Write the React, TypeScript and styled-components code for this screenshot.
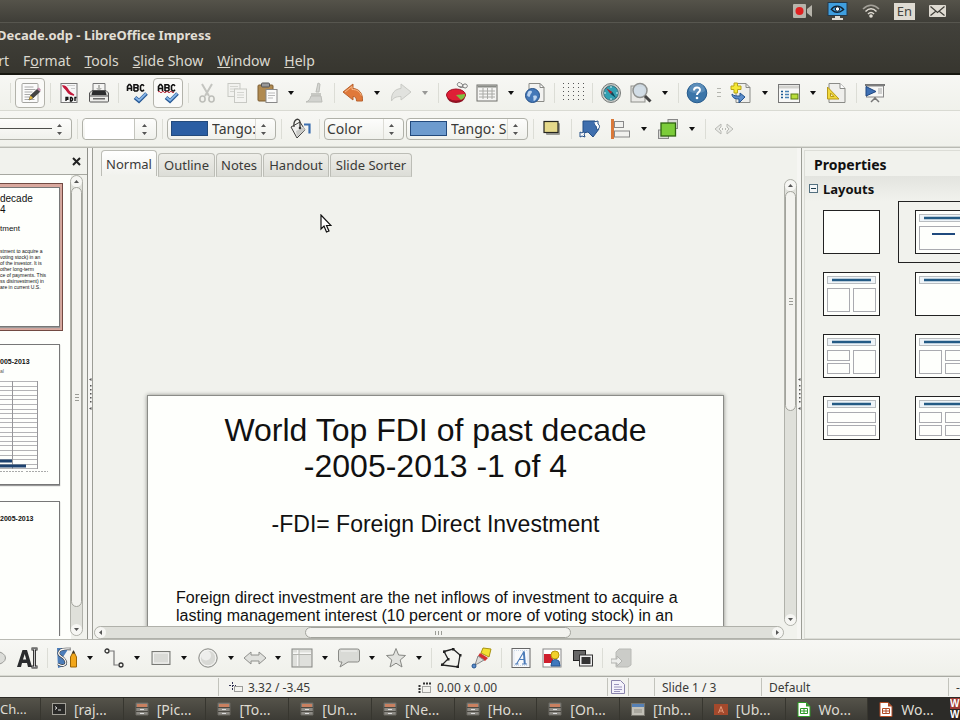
import React from "react";
import styled, { createGlobalStyle, css } from "styled-components";

const Global = createGlobalStyle`
  * { box-sizing: border-box; }
  html, body { margin: 0; padding: 0; overflow: hidden; }
  body { font-family: "Noto Sans", "Open Sans", sans-serif; font-size: 13px; color: #3a3a38; background: #f1f2ed; }
  button, select, input { font: inherit; color: inherit; margin: 0; padding: 0; border: 0; background: none; }
  svg { display: block; flex: none; }
  h1, h2, h3, p { margin: 0; font-weight: normal; }
`;

const Screen = styled.div`
  height: 100vh;
  display: flex;
  flex-direction: column;
  overflow: hidden;
`;

/* ---------- dark top ---------- */
const SystemPanel = styled.header`
  height: 23px;
  display: flex;
  align-items: center;
  justify-content: flex-end;
  gap: 14px;
  padding-right: 14px;
  background: linear-gradient(#55534a, #3f3e38);
  border-bottom: 1px solid #57564f;
  flex: none;
`;
const Indicator = styled.button`
  display: block;
`;
const Language = styled.button`
  width: 21px;
  height: 17px;
  background: #dfdbd2;
  color: #45443e;
  font-size: 13px;
  line-height: 17px;
`;
const TitleBar = styled.h1`
  height: 25px;
  flex: none;
  margin-left: -3px;
  font-size: 13px;
  font-weight: bold;
  line-height: 25px;
  color: #e2dfd6;
  white-space: nowrap;
`;
const TitleArea = styled.div`
  background: linear-gradient(#42413b, #37362f);
  border-bottom: 2px solid #16160f;
  flex: none;
  overflow: hidden;
`;
const MenuBar = styled.nav`
  height: 25px;
  display: flex;
  align-items: center;
  gap: 14px;
  color: #dbd8cf;
  font-size: 14px;
  line-height: 26px;
  white-space: nowrap;
`;
const Menu = styled.button`
  &:first-child { width: 9px; direction: rtl; }
`;

/* ---------- tool bars ---------- */
const Toolbar = styled.div<{ $h: number; $shift?: number }>`
  height: ${(p) => p.$h}px;
  flex: none;
  display: flex;
  align-items: center;
  overflow: hidden;
  background: linear-gradient(#f7f7f4, #f0f1eb);
  border-bottom: 1px solid #d9dad3;
  & > :first-child { margin-left: ${(p) => -(p.$shift ?? 0)}px; }
`;
const ToolButton = styled.button<{ $active?: boolean; $wide?: boolean }>`
  width: ${(p) => (p.$wide ? 31 : 30)}px;
  height: 30px;
  flex: none;
  display: flex;
  align-items: center;
  justify-content: center;
  ${(p) => p.$active && css`
    margin: 0 1px;
    border: 1px solid #b3b3ab;
    border-radius: 4px;
    background: #fafaf8;
  `}
`;
const Drop = styled.button<{ $narrow?: boolean; $dim?: boolean }>`
  width: ${(p) => (p.$narrow ? 16 : 18)}px;
  height: 30px;
  flex: none;
  display: flex;
  align-items: center;
  justify-content: center;
  opacity: ${(p) => (p.$dim ? 0.4 : 1)};
`;
const Separator = styled.span`
  width: 8px;
  height: 20px;
  flex: none;
  background: linear-gradient(#dcddd6, #dcddd6) center / 1px 100% no-repeat;
`;
const Combo = styled.label<{ $w: number; $open?: boolean }>`
  width: ${(p) => p.$w}px;
  height: 22px;
  flex: none;
  margin: 0 1px 0 ${(p) => (p.$open ? 0 : 1)}px;
  padding: 0 8px 0 ${(p) => (p.$open ? 0 : 2)}px;
  display: flex;
  align-items: center;
  gap: 4px;
  border: 1px solid #b0b1a9;
  border-left-width: ${(p) => (p.$open ? 0 : 1)}px;
  border-radius: ${(p) => (p.$open ? "0 4px 4px 0" : "4px")};
  background: linear-gradient(#fdfdfc, #f0f1ec);
  overflow: hidden;
`;
const Swatch = styled.span<{ $c: string }>`
  width: 37px;
  height: 15px;
  flex: none;
  margin-left: 1px;
  background: ${(p) => p.$c};
  border: 1px solid #234a7c;
`;
const Choice = styled.select`
  appearance: none;
  flex: 1;
  min-width: 0;
  height: 20px;
  font-size: 14px;
  line-height: 20px;
  border-right: 1px solid #dddcd6;
  overflow: hidden;
`;
const Amount = styled.input`
  flex: 1;
  min-width: 0;
  height: 20px;
  margin-right: 2px;
  border-right: 1px solid #c4c5be;
  background: #fff;
`;
const LineSample = styled.span`
  flex: 1;
  height: 1px;
  background: #4d4e4b;
`;

/* ---------- work area ---------- */
const Main = styled.main`
  flex: 1;
  min-height: 0;
  display: flex;
  border-top: 1px solid #b9bab3;
  border-bottom: 1px solid #b9bab3;
  background: #f1f2ed;
`;
const SlidePanel = styled.aside`
  width: 88px;
  flex: none;
  display: flex;
  flex-direction: column;
  border-right: 1px solid #8f908a;
`;
const PanelHead = styled.div`
  height: 27px;
  flex: none;
  display: flex;
  align-items: center;
  justify-content: flex-end;
  padding-right: 6px;
  border-bottom: 1px solid #a7a8a1;
`;
const PanelBody = styled.div`
  flex: 1;
  min-height: 0;
  display: flex;
  padding: 0 4px 3px 0;
  background: linear-gradient(90deg, #fefffc 71px, #f1f2ed 71px);
`;
const Thumbs = styled.div`
  flex: 1;
  display: flex;
  flex-direction: column;
  align-items: flex-start;
  overflow: hidden;
  padding-top: 8px;
  color: #111;
  font-family: "Liberation Sans", sans-serif;
  white-space: nowrap;
`;
const SelectedFrame = styled.div`
  width: 63px;
  height: 148px;
  flex: none;
  padding: 3px 3px 3px 0;
  background: #d9a89e;
  border: 1px solid #724a43;
  border-left: 0;
`;
const Thumb = styled.section<{ $h: number; $gap?: number }>`
  width: 60px;
  height: ${(p) => p.$h}px;
  flex: none;
  margin-top: ${(p) => p.$gap ?? 0}px;
  background: #fefffc;
  border: 1px solid #777;
  border-left: 0;
  box-shadow: 0 1px 1px #999;
  overflow: hidden;
`;
const ThumbTitle = styled.h3`
  font-size: 10px;
  line-height: 11px;
  padding-top: 5px;
`;
const ThumbSub = styled.p`
  font-size: 8px;
  line-height: 10px;
  padding: 9px 0 14px;
`;
const ThumbBody = styled.p`
  font-size: 5px;
  line-height: 6px;
`;
const ThumbHeading = styled.h3`
  font-size: 7px;
  font-weight: bold;
  line-height: 10px;
  padding-top: 12px;
`;
const ThumbNote = styled.p`
  font-size: 5px;
  line-height: 8px;
  color: #555;
`;

const Bar = styled.div<{ $row?: boolean }>`
  display: flex;
  flex: none;
  flex-direction: ${(p) => (p.$row ? "row" : "column")};
  ${(p) => (p.$row ? "height: 13px;" : "width: 13px;")}
  border: 1px solid #b0b1aa;
  border-radius: 7px;
  background: #dfe0da;
  overflow: hidden;
`;
const BarEnd = styled.button`
  flex: none;
  width: 11px;
  height: 11px;
  display: flex;
  align-items: center;
  justify-content: center;
  background: #f6f6f3;
  border-radius: 6px;
`;
const BarThumb = styled.div<{ $grow: number }>`
  flex: ${(p) => p.$grow} 1 0;
  display: flex;
  align-items: center;
  justify-content: center;
  background: #f3f3ef;
  border: 1px solid #a2a39c;
  border-radius: 7px;
`;
const BarSpace = styled.div<{ $grow: number }>`
  flex: ${(p) => p.$grow} 1 0;
`;

const Splitter = styled.div`
  width: 5px;
  flex: none;
  display: flex;
  align-items: center;
  justify-content: center;
  background: #f6f6f3;
  border-right: 1px solid #9c9d96;
`;

const Center = styled.div`
  flex: 1;
  min-width: 0;
  display: flex;
  flex-direction: column;
`;
const Tabs = styled.div`
  height: 29px;
  flex: none;
  display: flex;
  align-items: flex-end;
  gap: 1px;
  padding: 0 0 0 8px;
`;
const Tab = styled.button<{ $w: number; $active?: boolean }>`
  width: ${(p) => p.$w}px;
  height: ${(p) => (p.$active ? 26 : 24)}px;
  border: 1px solid #bcbdb6;
  border-bottom: 0;
  border-radius: 4px 4px 0 0;
  white-space: nowrap;
  line-height: 22px;
  ${(p) => p.$active
    ? css`background: linear-gradient(#fff, #f1f2ed); align-self: flex-start; margin-top: 2px;`
    : css`background: linear-gradient(#eeeee9, #dcddd7); border-bottom: 1px solid #d0d1ca;`}
`;
const WorkRow = styled.div`
  flex: 1;
  min-height: 0;
  display: flex;
  padding-top: 2px;
`;
const Canvas = styled.div`
  flex: 1;
  min-width: 0;
  position: relative;
  overflow: hidden;
  padding: 216px 60px 0 54px;
`;
const Pointer = styled.svg`
  position: absolute;
  left: 227px;
  top: 35px;
`;
const Slide = styled.article`
  height: 433px;
  background: #fefffc;
  border: 1px solid #8b8c88;
  box-shadow: 0 0 4px #8a8b86;
  font-family: "Liberation Sans", sans-serif;
  color: #111;
  padding: 16px 28px;
`;
const SlideTitle = styled.h2`
  font-size: 32px;
  line-height: 36px;
  text-align: center;
`;
const SlideSub = styled.p`
  font-size: 23px;
  line-height: 28px;
  text-align: center;
  padding: 26px 0 51px;
`;
const SlideText = styled.p`
  font-size: 16px;
  line-height: 18px;
  white-space: nowrap;
`;
const BottomRow = styled.div`
  display: flex;
  flex: none;
  padding: 0 13px 0 1px;
  & > * { flex: 1; }
`;

const Sidebar = styled.aside`
  width: 158px;
  flex: none;
  overflow: hidden;
  padding: 2px 0 0 2px;
  color: #111;
  background: #f1f2ed;
`;
const SideInner = styled.div`
  height: 100%;
  border: 1px solid #dcddd7;
  border-right: 0;
`;
const SideTitle = styled.h2`
  height: 25px;
  font-size: 14px;
  line-height: 28px;
  padding-left: 9px;
  font-weight: bold;
`;
const SideSection = styled.h3`
  height: 25px;
  display: flex;
  align-items: center;
  gap: 5px;
  padding-left: 4px;
  font-size: 13px;
  font-weight: bold;
  background: linear-gradient(#e3e4df, #f1f2ed);
`;
const Layouts = styled.div`
  display: grid;
  grid-template-columns: 92px 92px;
  grid-auto-rows: 62px;
  padding-left: 1px;
`;
const LayoutCell = styled.button<{ $on?: boolean }>`
  display: flex;
  align-items: center;
  padding-left: ${(p) => (p.$on ? 16 : 17)}px;
  border: ${(p) => (p.$on ? "1px solid #222" : "0")};
`;

/* ---------- bottom ---------- */
const StatusBar = styled.footer`
  height: 21px;
  flex: none;
  display: flex;
  align-items: center;
  border-top: 1px solid #a9aaa3;
  background: #f3f3ef;
  font-size: 12px;
  white-space: nowrap;
  overflow: hidden;
`;
const Field = styled.div<{ $w: number; $line?: boolean; $pad?: number; $grow?: boolean }>`
  ${(p) => (p.$grow ? "flex: 1;" : `flex: none; width: ${p.$w}px;`)}
  height: 18px;
  display: flex;
  align-items: center;
  gap: 5px;
  padding-left: ${(p) => p.$pad ?? 7}px;
  border-left: ${(p) => (p.$line ? "1px solid #c2c3bc" : "0")};
`;
const TaskBar = styled.footer`
  height: 23px;
  flex: none;
  display: grid;
  grid-template-columns: 40px repeat(11, 1fr) 10px;
  background: #4a4841;
  border-top: 1px solid #2b2a26;
  overflow: hidden;
`;
const Task = styled.button<{ $on?: boolean; $bare?: boolean }>`
  min-width: 0;
  height: 22px;
  display: flex;
  align-items: center;
  gap: 8px;
  padding-left: ${(p) => (p.$bare ? 0 : 11)}px;
  border-left: ${(p) => (p.$bare ? 0 : 1)}px solid #37362f;
  color: #dedbd2;
  font-size: ${(p) => (p.$bare ? 13 : 14)}px;
  white-space: nowrap;
  overflow: hidden;
  background: ${(p) => (p.$on ? "#2c2b28" : "linear-gradient(#55534a, #3c3b35)")};
`;
const Workspaces = styled.div`
  background: #2b2220;
  color: #fff;
  font-family: "Liberation Sans", sans-serif;
  font-size: 10px;
  line-height: 11px;
  font-weight: bold;
  overflow: hidden;
`;
const WorkspaceTop = styled.div`
  background: #9b3a35;
`;

/* ---------- icons ---------- */
const I = ({ children, s = 22 }: { children: React.ReactNode; s?: number }) => (
  <svg width={s} height={s} viewBox="0 0 22 22" fill="none" aria-hidden="true">{children}</svg>
);
const Caret = () => <svg width="6" height="4" viewBox="0 0 6 4"><path d="M0 0h6L3 4z" fill="#111" /></svg>;
const Steps = () => (
  <svg width="7" height="14" viewBox="0 0 7 14"><path d="M1 5l2.500-3L6 5zM1 10h5L3.500 13z" fill="#555" /></svg>
);

const icons: Record<string, React.ReactNode> = {
  red: <I><rect x="4" y="5" width="15" height="14" fill="#eee" stroke="#888" /><path d="M10 2l9 6" stroke="#c0392b" strokeWidth="2.500" /></I>,
  edit: <I><rect x="3" y="1.500" width="16" height="19" rx="1" fill="#fbfbfb" stroke="#a4a4a0" /><path d="M5.500 5h9M5.500 7.500h11M5.500 10h8M5.500 12.500h6M5.500 15h5M5.500 17.500h10" stroke="#aaa" /><path d="M10 18l1.500-4.500 7-6.500 2.500 2.500-7 6.500z" fill="#444" stroke="#222" strokeWidth=".6" /><path d="M18 7l2-1.500 2 2.500-1.500 1.500z" fill="#c58cab" /><path d="M11.500 13.500l2.500 2.500-4 2z" fill="#e5b93d" /></I>,
  pdf: <I><rect x="3" y="1.500" width="16" height="19" fill="#f6f6f6" stroke="#777" /><path d="M5 4c3 0 4 2 5.500 4.500S14 12 16 13c-3 0-5-1-7-4S6 6 5 4z" fill="#c2183a" stroke="#c2183a" strokeWidth="1.300" /><path d="M9 3.500h8M13 6.500h4" stroke="#ccc" /><path d="M8 19v-3.500h1.800v1.800H8M12.500 19v-3.500h1l1 1v1.500l-1 1zM17 19v-3.500h1.500" stroke="#111" strokeWidth="1.400" /></I>,
  print: <I><path d="M5 9V1.500h12V9" fill="#f4f4f2" stroke="#777" /><path d="M10 3h2v3h2l-3 3-3-3h2z" fill="#b5b6b2" /><path d="M1.500 11L4 8.500h14l2.500 2.500v5h-19z" fill="#d8d8d5" stroke="#555" /><path d="M4.500 9h13l1 4h-15z" fill="#2c2d2e" /><path d="M1.500 14h19v5a1 1 0 0 1-1 1h-17a1 1 0 0 1-1-1z" fill="#ededea" stroke="#555" /><path d="M5 16h12v1.500H5z" fill="#666" /></I>,
  spell: <I><Abc /><Check /></I>,
  autospell: <I><Abc /><path d="M1 10q1-1.500 2 0t2 0 2 0 2 0 2 0 2 0 2 0 2 0" stroke="#b8283a" /><Check /></I>,
  cut: <I><path d="M6 2l7 12M16 2L9 14" stroke="#c4c5c0" strokeWidth="2" /><ellipse cx="6.500" cy="17" rx="2.600" ry="3" stroke="#bdbeb9" strokeWidth="1.600" /><ellipse cx="15.500" cy="17" rx="2.600" ry="3" stroke="#bdbeb9" strokeWidth="1.600" /></I>,
  copy: <I><rect x="2" y="1.500" width="12" height="13" fill="#f2f2ef" stroke="#c8c9c4" /><path d="M4 4.500h8M4 7h8M4 9.500h4" stroke="#d4d5d0" /><rect x="8.500" y="7" width="12" height="13.500" fill="#f4f4f1" stroke="#c8c9c4" /><path d="M11 10.500h7M11 13h7M11 15.500h7" stroke="#d4d5d0" /></I>,
  paste: <I><rect x="2" y="3" width="15" height="16" rx="1" fill="#b08a50" stroke="#7d5e33" /><rect x="5.500" y="1" width="8" height="4" rx="1" fill="#999" stroke="#555" /><rect x="10" y="7.500" width="11" height="13" fill="#fbfbfa" stroke="#888" /><path d="M12 11h7M12 13.500h7M12 16h5" stroke="#bbb" /></I>,
  brush: <I><path d="M14 1l2 1-1 8h-3z" fill="#d5d6d2" stroke="#bbbcb7" /><path d="M7 11h10v3H7z" fill="#c7c8c3" /><path d="M7 14h10l1 6H2c3-1 4-3 5-6z" fill="#d2d3cf" stroke="#bbbcb7" /></I>,
  undo: <I><path d="M1 10L11 2v4.500c6 .5 10 4.500 9.500 12.500h-6c0-3-1-4.500-3.500-4.500V18z" fill="#e0793a" stroke="#b8622e" /><path d="M3 10l7-5.500v3c5 0 8 2 9.300 6" stroke="#f5b98a" /></I>,
  redo: <I><path d="M21 10L11 2v4.500c-6 .5-10 4.500-9.500 12.500 2-3 4-4.500 9.500-4.500V18z" fill="#e1e2de" stroke="#c9cac5" /></I>,
  chart: <I><ellipse cx="10" cy="15" rx="9" ry="6" fill="#8c1020" /><ellipse cx="10" cy="13" rx="9.500" ry="6" fill="#df1f36" stroke="#a01024" /><path d="M10 13l9-1c.5 3-2 5-4 6z" fill="#7fc241" /><path d="M13 4.500a2 2 0 1 0 2-3 2 2 0 1 0-2 3l5 1a2 2 0 1 0 1-3.500 2 2 0 0 0-2 3" stroke="#777" /></I>,
  table: <I><rect x="1" y="3" width="20" height="16" fill="#f5f5f3" stroke="#6e6f6b" /><path d="M1.500 4.500h19" stroke="#888a85" strokeWidth="2" /><path d="M3 9h16M3 12h16M3 15h16M7 6v11M11.500 6v11M16 6v11" stroke="#a9aaa6" /></I>,
  web: <I><path d="M5 1.500h11l4 4v14H5z" fill="#f3f3f1" stroke="#8a8b87" /><path d="M16 1.500v4h4z" fill="#fff" stroke="#8a8b87" /><circle cx="8.500" cy="13.500" r="7" fill="#4478b8" stroke="#234e86" /><path d="M4 10c2-2 4-1 4 0s-2 2-2 4-3 0-3-1M9 14c3-1 4 0 4 1s-2 4-3 4 0-3-1-5M9 9l3 2" fill="#bcd3ee" /></I>,
  grid: <I><path d="M1.500 1v20M6.500 1v20M11.500 1v20M16.500 1v20M21.500 1v20" stroke="#555" strokeDasharray="1 3" /></I>,
  compass: <I><circle cx="11" cy="11" r="9.500" fill="#c9cbc8" stroke="#777b79" /><circle cx="11" cy="11" r="7.200" fill="#32a0b2" stroke="#3b6f7a" /><path d="M6 6l6.500 4-2 2z" fill="#a52730" /><path d="M16 16l-5.500-4 2-2z" fill="#145" /><path d="M11 4v2M11 16v2M4 11h2M16 11h2" stroke="#d7f2f5" /></I>,
  zoom: <I><rect x="1" y="4" width="14" height="16" fill="#e9e9e6" stroke="#8e8f8b" /><circle cx="10" cy="8.500" r="7" fill="#cfdbe6" fillOpacity=".9" stroke="#909290" strokeWidth="1.500" /><path d="M15 14l5.500 5.500" stroke="#444" strokeWidth="3" /></I>,
  help: <I><circle cx="11" cy="11" r="9.800" fill="#3c76a9" stroke="#255a8c" /><path d="M3 9a8 8 0 0 1 16 0c-5 3-11 3-16 0z" fill="#5b8db9" /><path d="M8 8.500c0-4 6-4 6-.5 0 2.200-3 2.500-3 5" stroke="#fff" strokeWidth="2" /><circle cx="11" cy="16" r="1.300" fill="#fff" /></I>,
  newslide: <I><path d="M6 1.500h10l4 4v15H6z" fill="#efefec" stroke="#8a8b87" /><path d="M16 1.500v4h4" stroke="#8a8b87" /><path d="M4 1h3.500v3H11v3.500H7.500V11H4V7.500H1V4h3z" fill="#f5e835" stroke="#b8a416" /><path d="M2 12c0 4 3 5 7 5v4l6-6-5-4v3c-4 0-6 0-8-2z" fill="#5b8cca" stroke="#25548e" /></I>,
  slayout: <I><rect x=".5" y="2.500" width="21" height="18" fill="#f8f8f7" stroke="#777" /><path d="M1 5h20" stroke="#d2d2ce" strokeWidth="3" /><path d="M3 9.500h2M3 12.500h2M3 15.500h2" stroke="#1d5a94" strokeWidth="1.500" /><path d="M7 9.500h4M7 12.500h4M7 15.500h4" stroke="#4a82b5" strokeWidth="1.300" /><rect x="13" y="12" width="7" height="5" fill="#b8dc3a" stroke="#5a7c14" /></I>,
  ruler: <I><path d="M3 1.500h11l5 5v14H3z" fill="#efefec" stroke="#8a8b87" /><path d="M14 1.500v5h5" fill="#fff" stroke="#8a8b87" /><path d="M1.500 5v12H13z" fill="#f0d83c" stroke="#b89a18" /><path d="M4.500 11v3.500H8z" fill="#f8f3cf" stroke="#b89a18" /></I>,
  present: <I><path d="M1 3h20" stroke="#777" strokeWidth="2" /><rect x="2.500" y="4" width="17" height="11" fill="#f7f7f5" stroke="#888" /><path d="M14 7h4M14 9h4M14 11h4" stroke="#aaa" /><path d="M11 15v3M11 16l-4 4M11 16l4 4" stroke="#777" strokeWidth="1.500" /><path d="M2 4.500l10 5-10 4.500z" fill="#3e70b4" stroke="#1f4680" /></I>,
  bucket: <I><path d="M2 9l9-5 5 8-8 8z" fill="#f0f0ee" stroke="#3d3d3b" /><path d="M5 9c-1-8 5-10 6-5v6" stroke="#3d3d3b" strokeWidth="1.300" /><path d="M7 13l8-4 1 3-8 7z" fill="#c9cac7" /><circle cx="11" cy="10" r="1.300" fill="#333" /><path d="M15 6.500h5.500v9" stroke="#3c6fb0" strokeWidth="2.200" /></I>,
  shadow: <I><rect x="5" y="5" width="14" height="12" rx="1" fill="#9b9c96" /><rect x="3" y="3.500" width="14" height="11" fill="#e5d98a" stroke="#25251f" strokeWidth="1.200" /></I>,
  rotate: <I><path d="M4 3h12v4l4 4-6 8-5-5-5 1z" fill="#3f6fae" stroke="#234e86" /><path d="M1 19v-5l2 1c2-2 4 0 2 1l1 3-3-1zM15 4l4-1v3c3 2 1 5-1 6l-1-4" fill="#fff" stroke="#234e86" /></I>,
  align: <I><path d="M3.500 1v20" stroke="#d9793a" strokeWidth="3" /><rect x="5.500" y="3.500" width="9" height="6" fill="#f1f1ee" stroke="#888" /><rect x="5.500" y="13" width="15" height="6" fill="#f1f1ee" stroke="#888" /></I>,
  arrange: <I><rect x="11" y="1.500" width="9.500" height="9" fill="#d9dad6" stroke="#888" /><rect x="1.500" y="12" width="10" height="8.500" fill="#d9dad6" stroke="#888" /><rect x="4" y="5" width="14.500" height="13" fill="#7ccc3a" stroke="#2e6310" strokeWidth="1.300" /></I>,
  arrows: <I><path d="M8 6l-6 5 6 5v-3l-2-2 2-2zM14 6l6 5-6 5v-3l2-2-2-2z" fill="#e9eae6" stroke="#b9bab5" /><path d="M9 10h1v2H9zM12 10h1v2h-1z" fill="#b9bab5" /></I>,
  ellipse: <I><ellipse cx="10" cy="11" rx="9.500" ry="6.500" fill="#dcddd9" stroke="#9a9b97" /></I>,
  textA: <I><path d="M0 20L5.500 3h4.500l5 17h-4l-1-4H5l-1 4zM6 12.500h3.200L7.700 7z" fill="#2a2c2e" /><path d="M14.500 2h6M14.500 20h6M17.500 2v18" stroke="#222" strokeWidth="2.800" /><path d="M15 2h5M15 20h5M17.500 2v18" stroke="#eee" strokeWidth=".8" /></I>,
  curve: <I><path d="M1 1h12L7 10l4 8-9 3z" fill="#4c7db9" /><path d="M2 17c5 3 10 1 7-4s-8-4-6-8 7-3 12-3" stroke="#333" strokeWidth="2.400" /><path d="M2 17c5 3 10 1 7-4s-8-4-6-8 7-3 12-3" stroke="#fff" strokeWidth="1.200" /><path d="M14.500 10l3-6 3 6v10h-6z" fill="#f2a71b" stroke="#9a6508" /><path d="M16 6.500l1.500-3.500L19 6.500z" fill="#333" /></I>,
  connector: <I><circle cx="4" cy="4" r="2" stroke="#333" strokeWidth="1.300" /><circle cx="18" cy="18" r="2" stroke="#333" strokeWidth="1.300" /><path d="M6 4h5v14h5" stroke="#777" strokeWidth="1.200" /></I>,
  rect: <I><rect x="2" y="4.500" width="18" height="13" fill="#d9dad6" stroke="#777874" /><path d="M3.500 6h15v10h-15z" stroke="#f3f3f1" /></I>,
  ball: <I><circle cx="11" cy="11" r="9.200" fill="#d8d9d5" stroke="#8b8c88" /><circle cx="9" cy="8.500" r="5" fill="#eeeeec" /><circle cx="11" cy="11" r="7.800" stroke="#f6f6f4" /></I>,
  darrow: <I><path d="M0 11l7-6v3h8V5l7 6-7 6v-3H7v3z" fill="#e0e1dd" stroke="#8f908c" /></I>,
  flow: <I><rect x="1" y="2" width="20" height="18" fill="#dfe0dc" stroke="#848581" /><path d="M2 6.500h18M7 3v16" stroke="#f8f8f6" strokeWidth="2" /><path d="M2 7.500h18M8 3v16" stroke="#b4b5b0" /></I>,
  callout: <I><path d="M2.500 2h17a2 2 0 0 1 2 2v9a2 2 0 0 1-2 2H10l-8 5 2-5H2.500a2 2 0 0 1-2-2V4a2 2 0 0 1 2-2z" fill="#d9dad6" stroke="#898a86" /><path d="M3 4h16" stroke="#f4f4f2" /></I>,
  star: <I><path d="M11 1.500l2.600 6.500 6.900.5-5.300 4.500 1.800 7-6-3.800L5 20l1.800-7L1.500 8.500l6.900-.5z" fill="#e2e3df" stroke="#868783" /></I>,
  points: <I><path d="M4 4.500L13 2l7 6-2 12L2 18l6-6z" stroke="#222" strokeWidth="1.300" /><path d="M3 3.500h2.500V6H3zM12 1h2.500v2.500H12zM19 7h2.500v2.500H19zM16.500 18.500H19V21h-2.500zM1 16.500h2.500V19H1zM7 11h2.500v2.500H7z" fill="#222" /></I>,
  glue: <I><path d="M12 1l8 1-2 8-8-4z" fill="#f4e132" stroke="#a89312" /><path d="M9 6l8 5-3 3-7-5z" fill="#d32f2f" /><path d="M7 9l6 4-5 3-4 2z" fill="#dcdcd9" stroke="#888" /><circle cx="3" cy="19" r="2" fill="#5b8cca" stroke="#25548e" /></I>,
  fontwork: <I><rect x="2" y="1.500" width="18" height="19" fill="#f8f9fb" stroke="#666" /><rect x="4" y="3.500" width="14" height="15" stroke="#c8d7e8" strokeDasharray="1 1" /><path d="M6.500 17L14 4.500M9 12.500h5M5 17h3.500M12 17h5" stroke="#4a7ab8" strokeWidth="1.100" /><path d="M13.800 4.500L14.800 17" stroke="#4a7ab8" strokeWidth="2" /></I>,
  gallery: <I><rect x="2" y="2" width="18" height="18" fill="#fff" stroke="#888" /><rect x="3" y="7" width="9" height="9" fill="#cf1f2e" /><path d="M10 19l1-5 3-2 4 2 1 5z" fill="#3f78bd" stroke="#25548e" /><circle cx="14" cy="8" r="4" fill="#f2d02c" stroke="#b8960e" /></I>,
  stack: <I><rect x="1.500" y="3.500" width="12" height="10" fill="#666" stroke="#222" /><rect x="7.500" y="8" width="13" height="11" fill="#eee" stroke="#333" /><rect x="9.500" y="10" width="9" height="7" fill="#333" /></I>,
  extrude: <I><path d="M5 5l3-3h12v16l-3 2H5z" fill="#cbccc8" stroke="#b9bab6" /><path d="M0 12h6V9l5 5-5 5v-3H0z" fill="#ecedea" stroke="#b2b3af" /></I>,
};
function Abc() {
  return <path d="M1.500 9V4.500L3 2.500h1L5.500 4.500V9M1.500 6.500h4M8 9V2.700h3l1 1V5l-1 .8H8M11 5.800l1 1v1.200l-1 1H8M18 4l-1.200-1.300h-1L14.500 4v3.700L15.800 9h1L18 7.700" stroke="#111" strokeWidth="1.600" />;
}
function Check() {
  return <><path d="M9 15.500l4 3.500 7.500-7.500" stroke="#235694" strokeWidth="3.800" /><path d="M9.500 15.500l3.500 3 7-7" stroke="#85b4e6" strokeWidth="2" /></>;
}
const taskIcon: Record<string, React.ReactNode> = {
  file: <svg width="14" height="14" viewBox="0 0 14 14"><path d="M1 1h12v12H1z" fill="#8d8b85" stroke="#6b6963" /><path d="M2 2h10v3H2z" fill="#c98060" /><path d="M1 5.500h12M1 9.500h12" stroke="#4a4842" /><path d="M5 7.500h4M5 11.500h4" stroke="#ddd" /></svg>,
  term: <svg width="14" height="12" viewBox="0 0 14 12"><rect x=".5" y=".5" width="13" height="11" fill="#2a2a28" stroke="#a19f97" /><path d="M3 3.500l2 1.500-2 1.500M6 7h3" stroke="#ddd" fill="none" /></svg>,
  win: <svg width="14" height="13" viewBox="0 0 14 13"><rect x=".5" y=".5" width="13" height="12" fill="#c2c0b7" stroke="#77756d" /><path d="M1 1h12v3H1z" fill="#5580b5" /><path d="M3 6h8v4H3z" fill="#a9a79e" /></svg>,
  ub: <svg width="14" height="13" viewBox="0 0 14 13"><path d="M0 1h14v11H0z" fill="#a4492c" /><path d="M4.500 10L7 3.500 9.500 10M5.500 8h3" stroke="#e59b7b" fill="none" /></svg>,
  calc: <svg width="14" height="15" viewBox="0 0 14 15"><path d="M1 .5h8l4 4v10H1z" fill="#fff" stroke="#2d9a24" /><path d="M9 .5v4h4z" fill="#2d9a24" /><path d="M3.500 6.500h7v5h-7zM3.500 9h7M7 6.500v5" stroke="#2d9a24" fill="none" /></svg>,
  impress: <svg width="14" height="15" viewBox="0 0 14 15"><path d="M1 .5h8l4 4v10H1z" fill="#fff" stroke="#b24b24" /><path d="M9 .5v4h4z" fill="#b24b24" /><path d="M3.500 6.500h7v5h-7zM3.500 9h7M7 6.500v5" stroke="#b24b24" fill="none" /></svg>,
};

const row1 = ["red", "|", "*edit", "|", "pdf", "print", "|", "spell", "*autospell", "|", "cut", "copy", "paste", "v", "brush", "|", "undo", "v", "redo", "d", "|", "chart", "table", "v", "web", "|", "grid", "|", "compass", "zoom", "v", "|", "help", ":", "newslide", "v", "slayout", "v", "ruler", "|", "present"];
const row3 = ["ellipse", "textA", "|", "curve", "v", "connector", "v", "rect", "v", "ball", "v", "darrow", "v", "flow", "v", "callout", "v", "star", "v", "|", "points", "glue", "|", "fontwork", "gallery", "stack", "|", "extrude"];
const Grip = styled.span`
  width: 14px;
  height: 9px;
  flex: none;
  background: repeating-linear-gradient(#b5b6b0 0 1px, transparent 1px 4px) center / 4px 100% no-repeat;
`;
const Tools = ({ items, wide }: { items: string[]; wide?: boolean }) => (
  <>
    {items.map((it, i) => {
      if (it === "|") return <Separator key={i} />;
      if (it === ":") return <Grip key={i} />;
      if (it === "v" || it === "d") return <Drop key={i} $narrow={wide} $dim={it === "d"} aria-label="More options"><Caret /></Drop>;
      const on = it[0] === "*";
      const name = on ? it.slice(1) : it;
      return <ToolButton key={i} $active={on} $wide={wide} aria-label={name}>{icons[name]}</ToolButton>;
    })}
  </>
);

const Arrow = ({ d }: { d: string }) => <svg width="7" height="7" viewBox="0 0 7 7"><path d={d} fill="#555" /></svg>;
const up = "M1 5l2.500-3L6 5z", down = "M1 2h5L3.500 5z", left = "M5 1v5L2 3.500z", right = "M2 1v5l3-2.500z";
const Ridges = ({ row }: { row?: boolean }) => (
  <svg width="7" height="7" viewBox="0 0 7 7"><path d={row ? "M.5 2v4M3.500 2v4M6.500 2v4" : "M2 .5h4M2 3.500h4M2 6.500h4"} stroke="#9b9c96" /></svg>
);
const Dots = () => <svg width="3" height="32" viewBox="0 0 3 32"><path d="M2.500 0v3L0 1.500zM2.500 29v3L0 30.500zM1 7h1.500v1.500H1zM1 11h1.500v1.500H1zM1 15h1.500v1.500H1zM1 19h1.500v1.500H1zM1 23h1.500v1.500H1z" fill="#555" /></svg>;

const VBar = ({ parts }: { parts: [number, number] }) => (
  <Bar>
    <BarEnd aria-label="Scroll up"><Arrow d={up} /></BarEnd>
    <BarThumb $grow={parts[0]}><Ridges /></BarThumb>
    <BarSpace $grow={parts[1]} />
    <BarEnd aria-label="Scroll down"><Arrow d={down} /></BarEnd>
  </Bar>
);

const boxes: number[][][] = [
  [],
  [[5, 16, 48, 24]],
  [[5, 16, 22, 24], [31, 16, 22, 24]],
  [],
  [[5, 16, 22, 11], [5, 29, 22, 11], [31, 16, 22, 24]],
  [[5, 16, 22, 24], [31, 16, 22, 11], [31, 29, 22, 11]],
  [[5, 16, 48, 11], [5, 29, 48, 11]],
  [[5, 16, 22, 11], [31, 16, 22, 11], [5, 29, 22, 11], [31, 29, 22, 11]],
];
const LayoutPicture = ({ n }: { n: number }) => (
  <svg width="57" height="44" viewBox="0 0 57 44">
    <rect x=".5" y=".5" width="56" height="43" fill="#fefffc" stroke="#222" />
    {n > 0 && <><rect x="4.500" y="4.500" width="48" height="7" fill="#eef4f8" stroke="#b9bdc0" /><path d="M9 8h39" stroke="#245b85" strokeWidth="2.500" /></>}
    {n === 1 && <path d="M17 24h23" stroke="#1f4a7d" strokeWidth="2" />}
    {boxes[n].map((b, i) => <rect key={i} x={b[0] - 0.5} y={b[1] + 0.5} width={b[2]} height={b[3] - 1} fill="none" stroke="#aaabb0" />)}
  </svg>
);

const tabs: [string, number][] = [["Normal", 56], ["Outline", 57], ["Notes", 46], ["Handout", 66], ["Slide Sorter", 82]];
const tasks: [string, string][] = [["term", "[raj..."], ["file", "[Pic..."], ["file", "[To..."], ["file", "[Un..."], ["file", "[Ne..."], ["file", "[Ho..."], ["file", "[On..."], ["win", "[Inb..."], ["ub", "[Ub..."], ["calc", "Wo..."], ["impress", "Wo..."]];

export default function App() {
  return (
    <Screen>
      <Global />
      <SystemPanel>
        <Indicator aria-label="Recorder"><svg width="20" height="14" viewBox="0 0 20 14"><rect x="0" y="0" width="13" height="14" rx="1" fill="#b7b4ab" /><path d="M14 5l5-4v12l-5-4z" fill="#b7b4ab" /><circle cx="6.500" cy="7" r="4" fill="#e02020" /></svg></Indicator>
        <Indicator aria-label="Remote desktop"><svg width="21" height="18" viewBox="0 0 21 18"><rect x="1" y=".5" width="19" height="13" fill="#3f9fe0" stroke="#24384a" /><path d="M4 8c3-5 9-5 13 0M5 8c3 3 7 3 11 0" stroke="#123" fill="none" strokeWidth="1.400" /><circle cx="10.500" cy="7" r="2.200" fill="#fff" stroke="#123" /><path d="M8 14h5v2h3v2H5v-2h3z" fill="#dfdbd2" /></svg></Indicator>
        <Indicator aria-label="Network"><svg width="18" height="14" viewBox="0 0 18 14" fill="none" stroke="#dfdbd2" strokeWidth="1.600"><path d="M1 5c5-5 11-5 16 0" stroke="#a3a098" /><path d="M3.500 7.500c3.500-3.500 7.500-3.500 11 0M6 10c2-2 4-2 6 0" /><circle cx="9" cy="12" r="1" fill="#dfdbd2" /></svg></Indicator>
        <Language>En</Language>
        <Indicator aria-label="Messages"><svg width="17" height="12" viewBox="0 0 17 12"><rect width="17" height="12" rx="1" fill="#dfdbd2" /><path d="M1.500 1.500l7 6 7-6M1.500 10.500l5-4M15.500 10.500l-5-4" stroke="#3f3e38" fill="none" strokeWidth="1.200" /></svg></Indicator>
      </SystemPanel>
      <TitleArea>
        <TitleBar>Decade.odp - LibreOffice Impress</TitleBar>
        <MenuBar>
          <Menu>rt</Menu>
          <Menu>F<u>o</u>rmat</Menu>
          <Menu><u>T</u>ools</Menu>
          <Menu><u>S</u>lide Show</Menu>
          <Menu><u>W</u>indow</Menu>
          <Menu><u>H</u>elp</Menu>
        </MenuBar>
      </TitleArea>
      <Toolbar $h={36} $shift={24}><Tools items={row1} /></Toolbar>
      <Toolbar $h={36}>
        <Combo $w={72} $open><LineSample /><Steps /></Combo>
        <Separator />
        <Combo $w={75}><Amount aria-label="Line width" /><Steps /></Combo>
        <Separator />
        <Combo $w={109}><Swatch $c="#2b5ea3" /><Choice aria-label="Line color"><option>Tango:</option></Choice><Steps /></Combo>
        <Separator />
        <ToolButton aria-label="Area">{icons.bucket}</ToolButton>
        <Separator />
        <Combo $w={80}><Choice aria-label="Area style"><option>Color</option></Choice><Steps /></Combo>
        <Combo $w={122}><Swatch $c="#6d9bce" /><Choice aria-label="Area color"><option>Tango: Sl</option></Choice><Steps /></Combo>
        <Tools items={["|", "shadow", "|", "rotate", "align", "v", "arrange", "v", "|", "arrows"]} />
      </Toolbar>
      <Main>
        <SlidePanel>
          <PanelHead>
            <button aria-label="Close panel"><svg width="9" height="9" viewBox="0 0 9 9"><path d="M1 1l7 7M8 1L1 8" stroke="#222" strokeWidth="2" /></svg></button>
          </PanelHead>
          <PanelBody>
            <Thumbs>
              <SelectedFrame>
                <Thumb $h={140}>
                  <ThumbTitle>decade<br />4</ThumbTitle>
                  <ThumbSub>tment</ThumbSub>
                  <ThumbBody>stment to acquire a<br />voting stock) in an<br />of the investor. It is<br />other long-term<br />ce of payments. This<br />ss disinvestment) in<br />are in current U.S.</ThumbBody>
                </Thumb>
              </SelectedFrame>
              <Thumb $h={141} $gap={13}>
                <ThumbHeading>005-2013</ThumbHeading>
                <ThumbNote>al</ThumbNote>
                <svg width="50" height="98" viewBox="0 0 50 98">
                  {Array.from({ length: 20 }, (_, i) => <path key={i} d={`M0 ${Math.round(6 + i * 4.6) + 0.5}h38`} stroke="#b4b4b6" />)}
                  <path d="M12.500 6v88M37.500 6v88" stroke="#97979a" />
                  <path d="M0 86h12M0 91h26" stroke="#1d426f" strokeWidth="3" />
                  <path d="M0 96.500h23M26 96.500h22" stroke="#aaa" strokeDasharray="2 1" />
                </svg>
              </Thumb>
              <Thumb $h={141} $gap={16}><ThumbHeading>2005-2013</ThumbHeading></Thumb>
            </Thumbs>
            <VBar parts={[418, 17]} />
          </PanelBody>
        </SlidePanel>
        <Splitter><Dots /></Splitter>
        <Center>
          <Tabs role="tablist">
            {tabs.map(([t, w], i) => <Tab key={t} role="tab" aria-selected={i === 0} $w={w} $active={i === 0}>{t}</Tab>)}
          </Tabs>
          <WorkRow>
            <Canvas>
              <Slide>
                <SlideTitle>World Top FDI of past decade<br />-2005-2013 -1 of 4</SlideTitle>
                <SlideSub>-FDI= Foreign Direct Investment</SlideSub>
                <SlideText>Foreign direct investment are the net inflows of investment to acquire a<br />lasting management interest (10 percent or more of voting stock) in an</SlideText>
              </Slide>
              <Pointer width="12" height="20" viewBox="0 0 12 20"><path d="M1 1v14l3-3 2.500 6 2.500-1-2.500-5.500H11z" fill="#fff" stroke="#111" strokeWidth="1.200" /></Pointer>
            </Canvas>
            <VBar parts={[220, 204]} />
          </WorkRow>
          <BottomRow>
            <Bar $row>
              <BarEnd aria-label="Scroll left"><Arrow d={left} /></BarEnd>
              <BarSpace $grow={199} />
              <BarThumb $grow={265}><Ridges row /></BarThumb>
              <BarSpace $grow={201} />
              <BarEnd aria-label="Scroll right"><Arrow d={right} /></BarEnd>
            </Bar>
          </BottomRow>
        </Center>
        <Splitter><Dots /></Splitter>
        <Sidebar>
          <SideInner>
            <SideTitle>Properties</SideTitle>
            <SideSection>
              <svg width="9" height="9" viewBox="0 0 9 9"><rect x=".5" y=".5" width="8" height="8" fill="#f4f6f7" stroke="#53707f" /><path d="M2 4.500h5" stroke="#1c3c4e" /></svg>
              Layouts
            </SideSection>
            <Layouts>
              {boxes.map((_, i) => <LayoutCell key={i} $on={i === 1} aria-label={`Layout ${i + 1}`}><LayoutPicture n={i} /></LayoutCell>)}
            </Layouts>
          </SideInner>
        </Sidebar>
      </Main>
      <Toolbar $h={36} $shift={19}><Tools items={row3} wide /></Toolbar>
      <StatusBar>
        <Field $w={218} />
        <Field $w={193} $line $pad={10}><svg width="14" height="11" viewBox="0 0 14 11" fill="none"><path d="M0 3.500h7M3.500 0v8" stroke="#335" strokeDasharray="2 1" /><rect x="5.500" y="4.500" width="8" height="5" stroke="#444" strokeDasharray="1 1" /></svg>3.32 / -3.45</Field>
        <Field $w={196}><svg width="14" height="11" viewBox="0 0 14 11" fill="none"><path d="M5 1.500h8M1.500 3v8" stroke="#333" strokeDasharray="2 1" strokeWidth="2" /><rect x="4.500" y="4.500" width="8" height="6" stroke="#555" strokeDasharray="1 1" /></svg>0.00 x 0.00</Field>
        <Field $w={21} $line $pad={3}><svg width="14" height="14" viewBox="0 0 14 14"><path d="M.5.500h9l4 4v9H.5z" fill="#f4f2fb" stroke="#8a84ad" /><path d="M3 4.500h5M3 7h8M3 9.500h8M3 11.500h6" stroke="#9a94bd" /></svg></Field>
        <Field $w={26} $line />
        <Field $w={107} $line>Slide 1 / 3</Field>
        <Field $w={187} $line $grow>Default</Field>
        <Field $w={12} $line>-</Field>
      </StatusBar>
      <TaskBar>
        <Task $bare>Ch...</Task>
        {tasks.map(([ic, t], i) => <Task key={i} $on={i === 10}>{taskIcon[ic]}{t}</Task>)}
        <Workspaces><WorkspaceTop>W</WorkspaceTop>W</Workspaces>
      </TaskBar>
    </Screen>
  );
}
